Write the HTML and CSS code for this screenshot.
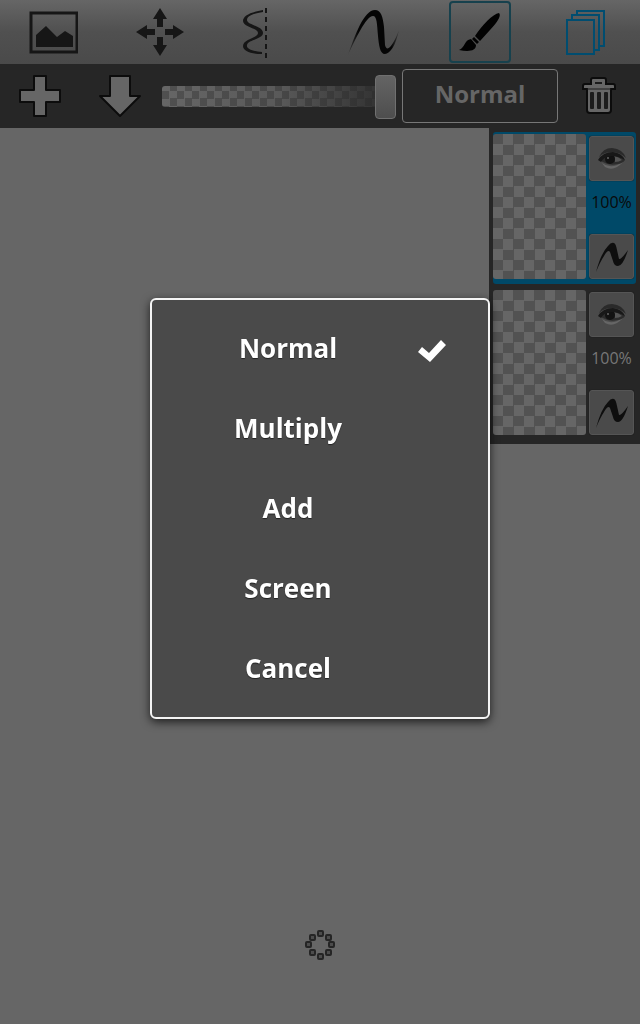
FILE: index.html
```html
<!DOCTYPE html>
<html lang="en">
<head>
    <meta charset="UTF-8">
    <meta name="viewport" content="width=device-width, initial-scale=1.0">
    <title>Sketch - Layers</title>
    <link rel="stylesheet" href="styles.css">
</head>
<body>
    <!-- shared shapes for the layer buttons -->
    <svg class="defs" width="0" height="0" aria-hidden="true">
        <defs>
            <symbol id="eye" viewBox="0 0 32 32">
                <path d="M6 20Q15 27 27 19Q18 29 9 24Z" fill="#666"/>
                <path d="M3 16Q9 10 17 11Q24 12 29 17Q27 20 22 21Q13 23 7 19Q4 18 3 16Z" fill="#2c2c2c"/>
                <path d="M19 19Q19 14 18 13Q23 14 26 17Q23 19 19 19Z" fill="#555"/>
                <circle cx="14" cy="16" r="5" fill="#121212"/>
                <circle cx="12" cy="15" r="1" fill="#666"/>
                <path d="M3 14Q7 5 16 5Q27 6 30 15Q24 9 16 9Q8 9 3 14Z" fill="#2a2a2a"/>
                <path d="M2 17Q7 9 17 9Q26 10 29 17Q22 13 16 13Q8 13 5 19Z" fill="#181818"/>
            </symbol>
            <symbol id="stroke" viewBox="0 0 32 32">
                <path d="M0 31Q5 12 12 5Q15 1 18 2Q20 3 21 9L23 18Q25 19 32 9Q27 25 22 25Q18 25 17 20L14 11Q12 8 8 15Q4 21 0 31Z" fill="#0e0e0e"/>
            </symbol>
        </defs>
    </svg>

    <nav class="toolbar">
        <button class="tool" aria-label="Gallery">
            <svg width="50" height="44" viewBox="0 0 50 44">
                <rect x="3" y="3" width="46" height="39" fill="none" stroke="#161616" stroke-width="3"/>
                <path d="M8 25L18 16L29 27L37 21L45 26V37H8Z" fill="#161616"/>
            </svg>
        </button>
        <button class="tool" aria-label="Transform">
            <svg width="48" height="48" viewBox="0 0 48 48">
                <g fill="#161616">
                    <path id="arm" d="M24 0L31 11H27V19H21V11H17Z"/>
                    <use href="#arm" transform="rotate(90 24 24)"/>
                    <use href="#arm" transform="rotate(180 24 24)"/>
                    <use href="#arm" transform="rotate(270 24 24)"/>
                </g>
            </svg>
        </button>
        <button class="tool" aria-label="Symmetry">
            <svg width="52" height="52" viewBox="0 0 52 52">
                <path d="M22 4C9 6 2 10 2 15C2 21 17 22 17 27C17 32 2 33 2 40C2 45 10 48 21 48V46C11 45 5 43 6 39C7 34 22 33 22 27C22 20 6 19 6 14C6 10 11 8 22 6Z" fill="#161616"/>
                <path d="M25 2V52" stroke="#161616" stroke-width="2" stroke-dasharray="5 4"/>
            </svg>
        </button>
        <button class="tool" aria-label="Predictive stroke">
            <svg width="52" height="48" viewBox="0 0 52 48">
                <defs>
                    <linearGradient id="ink">
                        <stop offset="0" stop-color="#050505" stop-opacity="0.2"/>
                        <stop offset="0.2" stop-color="#050505"/>
                        <stop offset="0.85" stop-color="#050505"/>
                        <stop offset="1" stop-color="#050505" stop-opacity="0.2"/>
                    </linearGradient>
                </defs>
                <path d="M1 47C8 27 17 2 28 2C34 2 36 9 37 19L38 37C40 46 47 36 52 22C49 37 43 46 38 46C33 46 32 38 31 28C30 16 30 8 26 8C19 8 8 32 1 47Z" fill="url(#ink)"/>
            </svg>
        </button>
        <button class="tool selected" aria-label="Brush">
            <svg width="42" height="42" viewBox="0 0 42 42">
                <path d="M40 2C43 5 37 13 31 19L21 30L16 25C23 14 34 3 40 2Z" fill="#020202"/>
                <path d="M15 26L20 31L18 33L13 28Z" fill="#020202"/>
                <path d="M12 28L17 34C17 40 10 41 0 39C6 37 5 29 12 28Z" fill="#020202"/>
            </svg>
        </button>
        <button class="tool" aria-label="Layers">
            <svg width="42" height="48" viewBox="0 0 42 48">
                <g fill="none" stroke="#004d70" stroke-width="2">
                    <path d="M11 6V3H38V38H33"/>
                    <path d="M6 11V7H33V42H28"/>
                    <rect x="1" y="12" width="27" height="34"/>
                </g>
            </svg>
        </button>
    </nav>

    <div class="layer-bar">
        <button class="bar-button" aria-label="Add layer">
            <svg width="42" height="42" viewBox="0 0 42 42">
                <path d="M15 1H27V15H41V27H27V41H15V27H1V15H15Z" fill="#666" stroke="#0c0c0c" stroke-width="2" stroke-linejoin="round"/>
            </svg>
        </button>
        <button class="bar-button" aria-label="Merge down">
            <svg width="42" height="42" viewBox="0 0 42 42">
                <path d="M11 1H31V21H41L21 41L1 21H11Z" fill="#666" stroke="#0c0c0c" stroke-width="2" stroke-linejoin="round"/>
            </svg>
        </button>
        <input class="opacity" type="range" min="0" max="100" value="100" aria-label="Opacity">
        <button class="blend-button">Normal</button>
        <button class="bar-button" aria-label="Delete layer">
            <svg width="36" height="38" viewBox="0 0 36 38">
                <path d="M10 7V3Q10 1 12 1H23Q25 1 25 3V7H32Q34 7 34 9V12H30V33Q30 36 27 36H9Q6 36 6 33V12H2V9Q2 7 4 7Z" fill="#666" stroke="#0c0c0c" stroke-width="2"/>
                <path d="M14 7V5H21V7Z" fill="#1c1c1c"/>
                <path d="M6 12H30" stroke="#1c1c1c"/>
                <g fill="#1c1c1c">
                    <rect x="9" y="15" width="4" height="17" rx="1"/>
                    <rect x="16" y="15" width="4" height="17" rx="1"/>
                    <rect x="23" y="15" width="4" height="17" rx="1"/>
                </g>
            </svg>
        </button>
    </div>

    <main class="canvas">
        <aside class="layers">
            <div class="layer selected">
                <div class="thumb"></div>
                <div class="layer-controls">
                    <button class="layer-button" aria-label="Toggle visibility"><svg width="32" height="32"><use href="#eye"/></svg></button>
                    <span>100%</span>
                    <button class="layer-button" aria-label="Layer stroke"><svg width="32" height="32"><use href="#stroke"/></svg></button>
                </div>
            </div>
            <div class="layer">
                <div class="thumb"></div>
                <div class="layer-controls">
                    <button class="layer-button" aria-label="Toggle visibility"><svg width="32" height="32"><use href="#eye"/></svg></button>
                    <span>100%</span>
                    <button class="layer-button" aria-label="Layer stroke"><svg width="32" height="32"><use href="#stroke"/></svg></button>
                </div>
            </div>
        </aside>
        <svg class="spinner" width="32" height="32" viewBox="0 0 32 32" aria-hidden="true">
            <g fill="#4c4c4c" stroke="#252525" stroke-width="2">
                <rect x="14" y="2" width="5" height="5" rx="1"/>
                <rect x="22" y="6" width="5" height="5" rx="1"/>
                <rect x="25" y="13" width="5" height="5" rx="1"/>
                <rect x="22" y="21" width="5" height="5" rx="1"/>
                <rect x="14" y="25" width="5" height="5" rx="1"/>
                <rect x="6" y="21" width="5" height="5" rx="1"/>
                <rect x="2" y="13" width="5" height="5" rx="1"/>
                <rect x="6" y="6" width="5" height="5" rx="1"/>
            </g>
        </svg>
    </main>

    <div class="overlay">
        <div class="dialog" role="dialog" aria-label="Blend mode">
            <button class="option">
                <span>Normal</span>
                <svg width="28" height="23" viewBox="0 0 28 23"><path d="M4 7L11 13L23 0L28 5L12 22L0 12Z" fill="#fff"/></svg>
            </button>
            <button class="option"><span>Multiply</span></button>
            <button class="option"><span>Add</span></button>
            <button class="option"><span>Screen</span></button>
            <button class="option"><span>Cancel</span></button>
        </div>
    </div>
</body>
</html>
```
FILE: styles.css
```css
* {
    box-sizing: border-box;
}
body {
    margin: 0;
    min-height: 100vh;
    display: flex;
    flex-direction: column;
    background: #666;
    font-family: "Open Sans", "Noto Sans", sans-serif;
}
button {
    margin: 0;
    padding: 0;
    border: none;
    background: none;
    font-family: inherit;
    cursor: pointer;
}
svg {
    display: block;
}
.defs {
    position: absolute;
}

/* Top toolbar */
.toolbar {
    display: grid;
    grid-template-columns: repeat(6, 1fr);
    height: 64px;
    background: linear-gradient(#666, #505050 50%, #4a4a4a);
}
.tool {
    display: flex;
    align-items: center;
    justify-content: center;
    justify-self: center;
    align-self: center;
    width: 62px;
    height: 62px;
}
.tool.selected {
    border: 2px solid #17414d;
    border-radius: 4px;
}

/* Layer bar */
.layer-bar {
    display: grid;
    grid-template-columns: 80px 80px 1fr 156px 82px;
    align-items: center;
    height: 64px;
    background: #262626;
}
.bar-button {
    display: flex;
    align-items: center;
    justify-content: center;
    height: 64px;
}
.opacity {
    -webkit-appearance: none;
    appearance: none;
    height: 44px;
    margin: 0 6px 0 2px;
    background: none;
}
.opacity::-webkit-slider-runnable-track {
    height: 21px;
    border-radius: 3px;
    background:
        linear-gradient(to right, rgba(38, 38, 38, 0), rgba(38, 38, 38, 0.2) 50%, rgba(38, 38, 38, 0.9)),
        repeating-conic-gradient(#666 0 25%, #505050 0 50%) 0 5px / 15px 15px;
}
.opacity::-webkit-slider-thumb {
    -webkit-appearance: none;
    width: 21px;
    height: 44px;
    margin-top: -11px;
    border: 1px solid #707070;
    border-radius: 4px;
    background: linear-gradient(#646464, #4e4e4e);
}
.blend-button {
    height: 54px;
    padding-bottom: 6px;
    border: 1px solid #777;
    border-radius: 4px;
    color: #666;
    font-size: 24px;
    font-weight: bold;
}

/* Canvas and layer panel */
.canvas {
    flex: 1;
    display: flex;
    flex-direction: column;
    justify-content: space-between;
    align-items: center;
    padding-bottom: 63px;
}
.layers {
    align-self: flex-end;
    display: flex;
    flex-direction: column;
    gap: 4px;
    padding: 4px;
    background: #262626;
}
.layer {
    display: flex;
    gap: 3px;
    height: 152px;
    padding: 2px 2px 5px 0;
    border-radius: 3px;
    color: #777;
}
.layer.selected {
    background: #004968;
    color: #0a0a0a;
}
.thumb {
    width: 93px;
    border-radius: 3px;
    background: repeating-conic-gradient(#525252 0 25%, #666 0 50%) 10px 0 / 21px 21px;
}
.layer-controls {
    display: flex;
    flex-direction: column;
    align-items: center;
    justify-content: space-between;
    width: 45px;
    padding-top: 2px;
    font-size: 16px;
    line-height: 24px;
}
.layer-controls span {
    padding-bottom: 12px;
}
.layer-button {
    display: flex;
    align-items: center;
    justify-content: center;
    width: 45px;
    height: 45px;
    border: 1px solid #555;
    border-radius: 3px;
    background: #4a4a4a;
    box-shadow: 0 0 1px #111;
}

/* Blend mode dialog */
.overlay {
    position: fixed;
    inset: 0;
    display: flex;
    align-items: center;
    justify-content: center;
    padding-bottom: 7px;
}
.dialog {
    width: 340px;
    padding: 8px 0 9px;
    border: 2px solid #f4f4f4;
    border-radius: 6px;
    background: #4a4a4a;
    box-shadow: 0 3px 10px rgba(0, 0, 0, 0.7);
}
.option {
    display: grid;
    grid-template-columns: 272px 1fr;
    align-items: center;
    width: 100%;
    height: 80px;
    color: #fff;
    font-size: 26px;
    font-weight: bold;
    text-shadow: 0 1px 1px #222;
}
.option svg {
    margin: 6px 0 0 -6px;
}
```
